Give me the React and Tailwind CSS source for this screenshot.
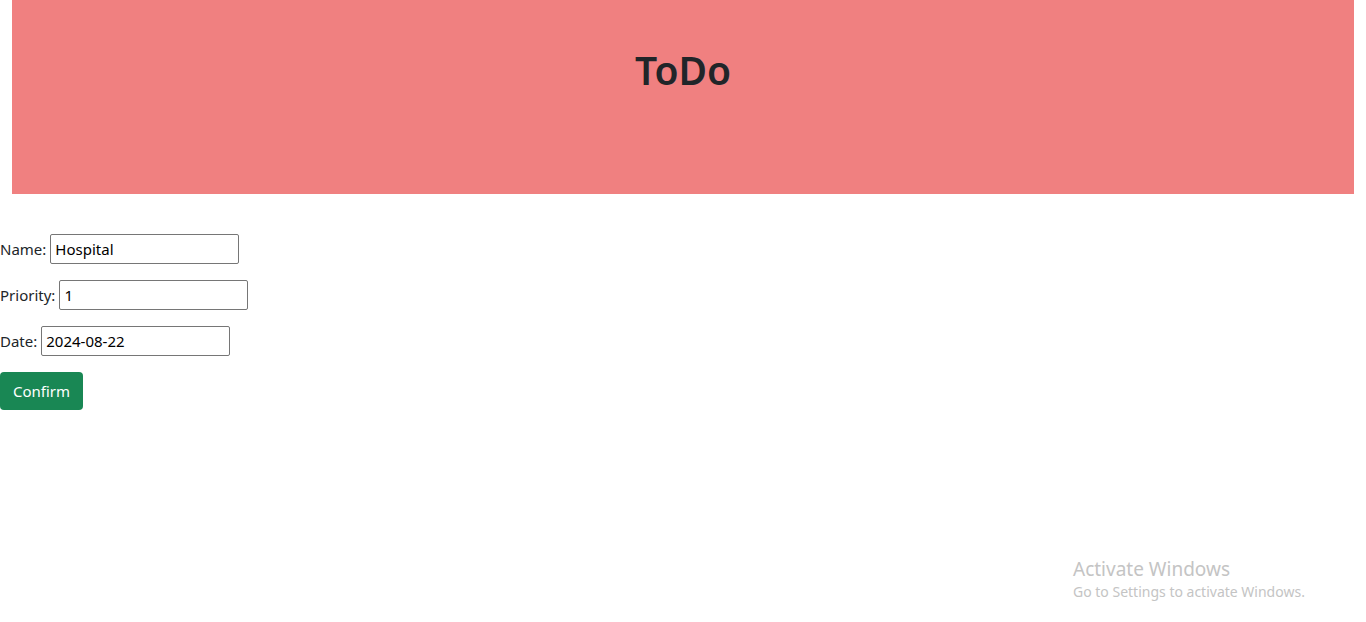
import React, { useState } from 'react';

const font = { fontFamily: '"Noto Sans", "Open Sans", sans-serif' };

const Field = ({ label, value, onChange }) => (
  <p className="mb-4 flex items-center">
    <label className="mr-1">{label}</label>
    <input
      type="text"
      value={value}
      onChange={(e) => onChange(e.target.value)}
      className="h-[30px] w-[189px] rounded-[2px] border border-[#767676] px-[4px] text-[15px] text-black outline-none"
    />
  </p>
);

export default function App() {
  const [name, setName] = useState('Hospital');
  const [priority, setPriority] = useState('1');
  const [date, setDate] = useState('2024-08-22');

  return (
    <div className="relative min-h-[622px] bg-white text-[15px] text-[#212529]" style={font}>
      <header className="mx-[12px] flex h-[194px] justify-center bg-[#f08080] pt-[44px]">
        <h1 className="text-[39px] font-semibold leading-[52px] text-[#212529]">ToDo</h1>
      </header>

      <form className="mt-[40px]" onSubmit={(e) => e.preventDefault()}>
        <Field label="Name:" value={name} onChange={setName} />
        <Field label="Priority:" value={priority} onChange={setPriority} />
        <Field label="Date:" value={date} onChange={setDate} />
        <button
          type="submit"
          className="h-[38px] rounded-[4px] bg-[#198754] px-[13px] text-[15px] text-white"
        >
          Confirm
        </button>
      </form>

      <div className="absolute left-[1073px] top-[556px] text-[#c4c4c4]">
        <div className="text-[19px] leading-[26px]">Activate Windows</div>
        <div className="text-[14px] leading-[19px]">Go to Settings to activate Windows.</div>
      </div>
    </div>
  );
}
